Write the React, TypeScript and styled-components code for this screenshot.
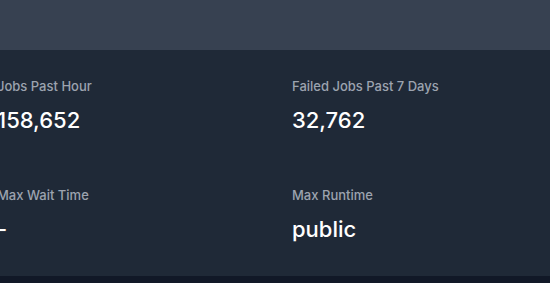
import styled, { createGlobalStyle } from "styled-components";

const GlobalStyle = createGlobalStyle`
  html, body {
    margin: 0;
    padding: 0;
    background: #111827;
    font-family: "Inter", "Open Sans", sans-serif;
  }
`;

const Page = styled.div`
  display: flex;
  flex-direction: column;
  width: 550px;
  height: 283px;
  overflow: hidden;
  background: #111827;
`;

const TopBand = styled.div`
  height: 50px;
  background: #374151;
`;

const Card = styled.section`
  height: 226px;
  box-sizing: border-box;
  background: #1f2937;
  padding: 26px 0 0 0;
`;

const StatsGrid = styled.div`
  display: grid;
  grid-template-columns: 295px 1fr;
  row-gap: 51px;
  margin-left: -3px;
`;

const Stat = styled.div`
  display: flex;
  flex-direction: column;
  gap: 10px;
`;

const Label = styled.span`
  font-size: 13px;
  line-height: 20px;
  font-weight: 500;
  color: #9ca3af;
`;

const Value = styled.span`
  font-size: 22px;
  line-height: 28px;
  font-weight: 500;
  color: #ffffff;
`;

const stats = [
  { label: "Jobs Past Hour", value: "158,652" },
  { label: "Failed Jobs Past 7 Days", value: "32,762" },
  { label: "Max Wait Time", value: "-" },
  { label: "Max Runtime", value: "public" },
];

export default function App() {
  return (
    <>
      <GlobalStyle />
      <Page>
        <TopBand />
        <Card>
          <StatsGrid>
            {stats.map((s) => (
              <Stat key={s.label}>
                <Label>{s.label}</Label>
                <Value>{s.value}</Value>
              </Stat>
            ))}
          </StatsGrid>
        </Card>
      </Page>
    </>
  );
}
